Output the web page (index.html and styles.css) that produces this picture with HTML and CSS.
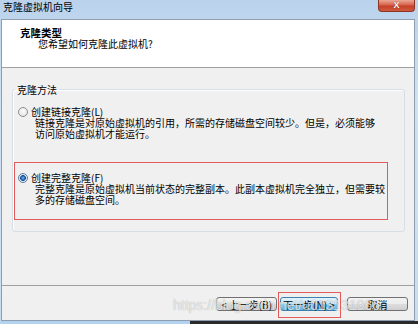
FILE: index.html
```html
<!DOCTYPE html>
<html lang="zh-CN">
<head>
<meta charset="utf-8">
<title>克隆虚拟机向导</title>
<link rel="stylesheet" href="styles.css">
</head>
<body>
<div class="window">
  <div class="titlebar">
    <span class="title">克隆虚拟机向导</span>
    <span class="close">X</span>
  </div>
  <div class="client">
    <div class="header">
      <div class="h-title">克隆类型</div>
      <div class="h-sub">您希望如何克隆此虚拟机?</div>
    </div>
    <div class="main">
      <fieldset class="group">
        <legend class="group-label">克隆方法</legend>
        <div class="option">
          <div class="opt-row"><span class="radio"></span><span>创建链接克隆(L)</span></div>
          <div class="desc">链接克隆是对原始虚拟机的引用，所需的存储磁盘空间较少。但是，必须能够<br>访问原始虚拟机才能运行。</div>
        </div>
        <div class="option marked">
          <div class="opt-row"><span class="radio checked"></span><span>创建完整克隆(F)</span></div>
          <div class="desc">完整克隆是原始虚拟机当前状态的完整副本。此副本虚拟机完全独立，但需要较<br>多的存储磁盘空间。</div>
        </div>
      </fieldset>
    </div>
    <div class="footer">
      <button class="btn">&lt; 上一步(B)</button>
      <span class="mark-box"><button class="btn default">下一步(N) &gt;</button></span>
      <button class="btn cancel">取消</button>
    </div>
  </div>
  <div class="bottom-frame"><span class="bf-light"></span><span class="bf-dark"></span></div>
  <div class="watermark">https://blog.csdn.net/u013131966</div>
</div>
</body>
</html>
```

FILE: styles.css
```css
html, body {
  margin: 0;
  padding: 0;
}
body {
  width: 418px;
  height: 324px;
  overflow: hidden;
  font-family: "Noto Sans CJK SC", "Liberation Sans", sans-serif;
  font-size: 10px;
  color: #000;
}
.window {
  position: relative;
  width: 418px;
  height: 324px;
  background: linear-gradient(#bad2ec, #cfe1f4 30%, #c9ddf2);
  display: flex;
  flex-direction: column;
}
.titlebar {
  height: 19px;
  display: flex;
  justify-content: space-between;
  align-items: flex-start;
  padding-left: 3px;
  box-sizing: border-box;
}
.title {
  padding-top: 1px;
  line-height: 12px;
  font-size: 10px;
}
.close {
  width: 37px;
  height: 12px;
  margin-right: 3px;
  box-sizing: border-box;
  border: 1px solid #8a3526;
  border-top: none;
  border-radius: 0 0 4px 4px;
  background: linear-gradient(#e9a895, #d8634b 45%, #c4412a 55%, #cf5a3c);
  color: #fff;
  font-family: "Liberation Sans", sans-serif;
  font-weight: bold;
  font-size: 9px;
  line-height: 11px;
  text-align: center;
  text-shadow: 0 0 1px #6a2010;
}
.client {
  margin-left: 1px;
  width: 414px;
  height: 302px;
  box-sizing: border-box;
  border: 1px solid #8e9db0;
  background: #f0f0f0;
  display: flex;
  flex-direction: column;
}
.header {
  height: 48px;
  box-sizing: border-box;
  background: #fff;
  border-bottom: 1px solid #a0a0a0;
  padding: 7px 0 0 18px;
  line-height: 11px;
}
.h-title {
  font-weight: bold;
  font-size: 10.5px;
}
.h-sub {
  padding-left: 18px;
}
.main {
  flex: 1;
  padding: 16px 9px 0 10px;
}
.group {
  margin: 0;
  padding: 11px 0 11px 0;
  min-width: 0;
  border: 1px solid #d5dfe5;
  border-radius: 3px;
  box-shadow: inset 1px 1px 0 #fff;
}
.group-label {
  padding: 0 2px;
  margin-left: 2px;
  line-height: 11px;
}
.option {
  line-height: 11px;
  white-space: nowrap;
}
.opt-row {
  display: flex;
  align-items: center;
  padding-left: 5px;
}
.radio {
  width: 10px;
  height: 10px;
  box-sizing: border-box;
  border-radius: 50%;
  border: 1px solid #8f8f8f;
  background: radial-gradient(circle at 50% 40%, #fdfdfd, #dcdcdc);
  margin-right: 3px;
}
.radio.checked {
  border-color: #5a7fa8;
  background: radial-gradient(circle at 50% 50%, #7ec0f0 0, #2c72bf 1.6px, #1d4f8c 2.6px, #dfe5ec 3.2px, #f4f4f4 100%);
}
.desc {
  padding-left: 22px;
}
.option.marked {
  margin: 23px 16px 0 1px;
  border: 1px solid #e35a5a;
  padding: 9px 0 14px 0;
}
.option.marked .opt-row {
  padding-left: 3px;
}
.option.marked .desc {
  padding-left: 20px;
}
.footer {
  height: 35px;
  box-sizing: border-box;
  border-top: 1px solid #a0a0a0;
  display: flex;
  justify-content: flex-end;
  align-items: flex-start;
  padding: 6px 6px 0 0;
}
.btn {
  height: 14px;
  box-sizing: border-box;
  margin: 5px 0 0 0;
  padding: 0;
  border: 1px solid #707070;
  border-radius: 3px;
  background: linear-gradient(#f3f3f3, #ebebeb 50%, #dddddd 51%, #cfcfcf);
  font-family: "Noto Sans CJK SC", "Liberation Sans", sans-serif;
  font-size: 10px;
  line-height: 11px;
  color: #000;
  width: 61px;
}
.mark-box {
  margin-left: 1px;
  border: 1px solid #e35a5a;
  padding: 4px 2px 6px 1px;
  display: flex;
}
.btn.default {
  margin: 0;
  width: 58px;
  border-color: #3c7fb1;
  background: linear-gradient(#e5f4fc, #c4e5f6 50%, #98d1ef 51%, #68b3db);
}
.btn.cancel {
  margin-left: 6px;
}
.bottom-frame {
  flex: 1;
  display: flex;
}
.bf-light {
  width: 190px;
  background: #b3d2ef;
}
.bf-dark {
  flex: 1;
  background: #2a2a2a;
}
.watermark {
  position: absolute;
  left: 173px;
  top: 297px;
  font-family: "Liberation Sans", sans-serif;
  font-size: 14px;
  line-height: 16px;
  color: rgba(255, 255, 255, 0.72);
  text-shadow: 0 0 1px rgba(0, 0, 0, 0.35);
  white-space: nowrap;
  pointer-events: none;
}
```
